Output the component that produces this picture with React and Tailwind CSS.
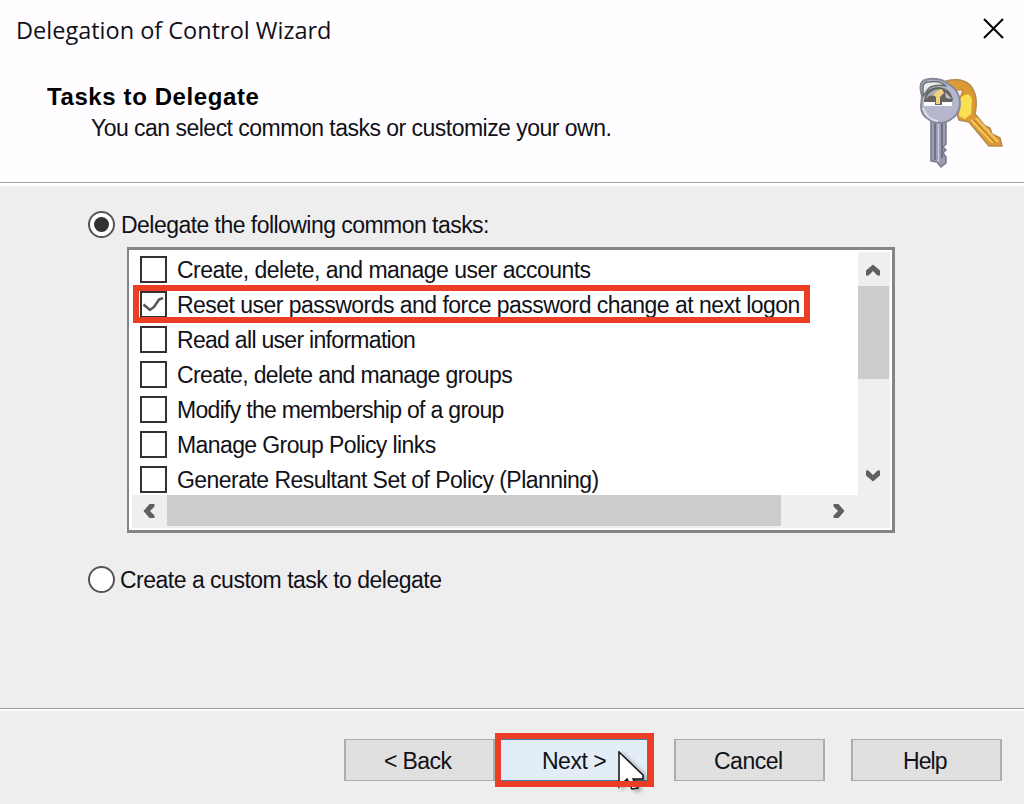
const tasks = [
  { label: "Create, delete, and manage user accounts", cls: "tracking-[-0.53px]" },
  { label: "Reset user passwords and force password change at next logon", cls: "tracking-[-0.53px]", checked: true },
  { label: "Read all user information", cls: "tracking-[-0.7px]" },
  { label: "Create, delete and manage groups", cls: "tracking-[-0.64px]" },
  { label: "Modify the membership of a group", cls: "tracking-[-0.7px]" },
  { label: "Manage Group Policy links", cls: "tracking-[-0.6px]" },
  { label: "Generate Resultant Set of Policy (Planning)", cls: "tracking-[-0.54px]" },
];

function Chevron({ className }) {
  return (
    <svg viewBox="0 0 16 12" className={className} fill="#606060">
      <path d="M8 0.5 15 6.500V11.5H12.5L8 7 3.500 11.500H1V6.500Z" />
    </svg>
  );
}

function Keys() {
  return (
    <svg viewBox="0 0 95 104" className="h-[104px] w-[95px]" strokeLinejoin="round">
      <path d="M31 11Q47 7 55 15Q64 25 60 44L70 56L75 58L77 64L85 68L87 76H74L54 52L44 50L38 30Z" fill="#dc9a35" stroke="#b28a52" strokeWidth="1.500" />
      <path d="M45 28Q55 20 57 30L56 44L50 49L44 46Z" fill="#f8e052" />
      <path d="M40 20H48L45 28" fill="#f3f0ec" stroke="#b87b3a" />
      <path d="M56 50L78 73M61 48L83 72" stroke="#f6c253" strokeWidth="2.500" />
      <path d="M59 50L80 73" stroke="#a8742f" strokeWidth="1" />
      <path d="M16 50H31V74L28 77L31 80L28 83L31 87V93L26 97L22 92L16 91Z" fill="#9a9bb0" stroke="#77798f" strokeWidth="1.500" />
      <path d="M20 50V90M27 52V88" stroke="#6c6e86" strokeWidth="1.800" />
      <path d="M23.500 50V92" stroke="#c9cadb" strokeWidth="1.500" />
      <path d="M7 26Q3 12 10 10Q24 6 35 15Q45 21 45 34Q45 44 35 50Q26 56 15 50Q6 46 6 36Z" fill="#b5b7cc" stroke="#85899a" strokeWidth="2" />
      <path d="M8 17Q8 12 14 12Q24 10 31 16Q20 14 14 18L8 26Z" fill="#e9eceb" stroke="#66716f" strokeWidth="1.500" />
      <path d="M9 31Q10 17 24 17Q35 18 38 29L36 35H11Z" fill="#65645f" />
      <path d="M10 30Q15 18 26 19L21 25L14 26Z" fill="#a7abae" />
      <path d="M22 21L27 19L29 23L25 27V34H21V27L18 25Z" fill="#efd184" />
      <path d="M30 22L37 29L31 28Z" fill="#c2c4cb" />
      <path d="M9 32H20V35H27V32H37V36H9Z" fill="#fafaff" />
      <path d="M8 38Q12 50 23 51" stroke="#dfe0ee" strokeWidth="2" fill="none" />
    </svg>
  );
}

function Button({ children, width = "w-[151px]", colors = "border-x-2 border-[#adadad] bg-[#e1e0e0]", text }) {
  return (
    <button className={`flex h-[42px] shrink-0 items-center border-y pt-px ${width} ${colors}`}>
      <span className={text}>{children}</span>
    </button>
  );
}

export default function App() {
  return (
    <div className="flex h-[804px] w-[1024px] flex-col overflow-hidden bg-[#efeeee] font-['Liberation_Sans',sans-serif] text-[23px] leading-[28px] whitespace-nowrap text-[#111118]">
      <header className="flex h-[183px] justify-between border-b border-[#a0a0a0] bg-[#fffdff]">
        <div className="pl-4">
          <h1 className="mt-[15px] font-['Open_Sans',sans-serif] text-[23.5px] leading-[30px]">Delegation of Control Wizard</h1>
          <h2 className="mt-[38px] pl-[31px] text-[24px] font-bold tracking-[0.6px] text-black">Tasks to Delegate</h2>
          <p className="mt-[3px] pl-[75px] tracking-[-0.52px]">You can select common tasks or customize your own.</p>
        </div>
        <div className="flex flex-col items-end pt-[18px]">
          <svg viewBox="0 0 21 21" className="mr-5 h-[21px] w-[21px]" stroke="#000" strokeWidth="2">
            <path d="M1 1 20 20M20 1 1 20" />
          </svg>
          <div className="mt-[31px] mr-[14px]"><Keys /></div>
        </div>
      </header>
      <main className="h-[525px] border-t-[3px] border-white pt-[24px]">
        <label className="flex h-[28px] items-center pl-[88px]">
          <span className="flex size-[27px] items-center justify-center rounded-full border-2 border-[#555] bg-white">
            <span className="size-[15px] rounded-full bg-[#333]" />
          </span>
          <span className="pt-[2px] pl-[6px] tracking-[-0.54px]">Delegate the following common tasks:</span>
        </label>
        <div className="relative mt-[9px] ml-[127px] flex h-[286px] w-[768px] flex-col border-[3px] border-l-2 border-[#868486] bg-white pt-[2px] pr-[2px] pb-[2px] pl-[3px]">
          <div className="flex h-[243px]">
            <div className="w-[726px] overflow-hidden pt-[4px]">
              {tasks.map((t) => (
                <label key={t.label} className="flex h-[35px] items-start pl-2">
                  <span className="size-[27px] border-2 border-[#333033] bg-white">
                    {t.checked && (
                      <svg viewBox="0 0 23 23" className="size-[23px]" fill="none" stroke="#555" strokeWidth="2.500">
                        <path d="M1.500 11.500 8 17 12 14 17 6.500 21 5" />
                      </svg>
                    )}
                  </span>
                  <span className={`ml-[10px] ${t.cls}`}>{t.label}</span>
                </label>
              ))}
            </div>
            <div className="flex w-[32px] flex-col bg-[#f0efef]">
              <div className="flex h-[34px] justify-center pt-[12px]"><Chevron className="mr-[2px] h-[12px] w-[16px]" /></div>
              <div className="h-[93px] w-[31px] bg-[#cdcccc]" />
              <div className="mt-auto flex h-[25px] justify-center"><Chevron className="mr-[2px] h-[12px] w-[16px] rotate-180" /></div>
            </div>
          </div>
          <div className="flex h-[33px] bg-[#f0efef]">
            <div className="flex w-[35px] pt-[10px] pl-[9px]"><Chevron className="h-[12px] w-[16px] -rotate-90" /></div>
            <div className="h-[31px] w-[614px] bg-[#cdcccc]" />
            <div className="pt-[10px] pl-[50px]"><Chevron className="h-[12px] w-[16px] rotate-90" /></div>
          </div>
          <div className="absolute top-[35px] left-[4px] h-[38px] w-[677px] border-[6px] border-[#eb3f25]" />
        </div>
        <label className="mt-[32px] flex h-[28px] items-center pl-[88px]">
          <span className="size-[27px] rounded-full border-2 border-[#555] bg-white" />
          <span className="pt-px pl-[5px] tracking-[-0.5px]">Create a custom task to delegate</span>
        </label>
      </main>
      <footer className="flex h-[96px] border-t border-[#a0a0a0]">
        <div className="flex h-[95px] w-full border-t-2 border-white pt-[28px] pl-[344px]">
          <Button text="pl-[38px] tracking-[-0.6px]">&lt; Back</Button>
          <div className="relative flex">
            <Button width="w-[153px]" colors="border-r border-[#3f7ea8] bg-[#e3edf7]" text="pl-[47px] tracking-[-0.5px]">Next &gt;</Button>
            <svg viewBox="0 0 36 42" className="absolute top-[12px] left-[123px] h-[42px] w-[36px] drop-shadow-[3px_2px_2px_rgba(0,0,0,0.35)]">
              <path d="M1 1V36L9 28L14 38L20 37L15 28H25V24Z" fill="#fff" stroke="#111" strokeWidth="1.500" />
            </svg>
            <div className="absolute -top-[6px] left-0 h-[54px] w-[159px] border-[6px] border-[#eb3f25]" />
          </div>
          <div className="flex gap-[26px] pl-[26px]">
            <Button text="pl-[38px] tracking-[-0.5px]">Cancel</Button>
            <Button text="pl-[50px] tracking-[-0.9px]">Help</Button>
          </div>
        </div>
      </footer>
    </div>
  );
}
